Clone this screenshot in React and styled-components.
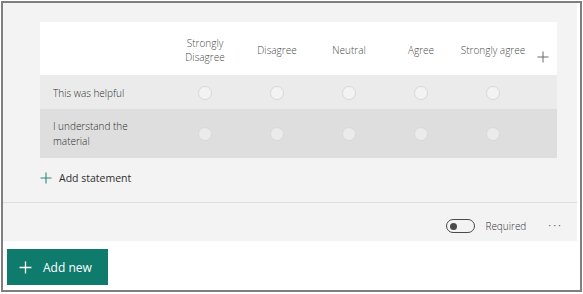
import React from "react";
import styled, { createGlobalStyle } from "styled-components";

const GlobalStyle = createGlobalStyle`
  html, body { margin: 0; padding: 0; background: #ffffff; }
  body { font-family: "Open Sans", "Noto Sans", sans-serif; }
  * { box-sizing: border-box; }
`;

const Frame = styled.div`
  margin: 1px;
  width: 581px;
  height: 291px;
  border: 2px solid #7f7f7f;
  background: #ffffff;
  display: flex;
  flex-direction: column;
`;

const Panel = styled.section`
  width: 574px;
  height: 238px;
  background: #f3f3f3;
  display: flex;
  flex-direction: column;
`;

const Body = styled.div`
  padding: 19px 20px 0 37px;
  flex: 1;
  display: flex;
  flex-direction: column;
`;

const Card = styled.div`
  background: #ffffff;
  display: grid;
  grid-template-columns: 129px repeat(5, 72px) 1fr;
`;

const HeadCell = styled.div`
  height: 53px;
  display: flex;
  align-items: center;
  justify-content: center;
  text-align: center;
  font-size: 10px;
  font-weight: 300;
  line-height: 14px;
  color: #4a4a4a;
  padding-top: 3px;
`;

const PlusCell = styled(HeadCell)`
  padding-top: 17px;
  color: #6a6a6a;
`;

const RowLabel = styled.div`
  height: ${(p) => p.$h}px;
  background: ${(p) => p.$bg};
  display: flex;
  align-items: center;
  padding-left: 13px;
  padding-top: ${(p) => p.$pt || 0}px;
  font-size: 10px;
  font-weight: 300;
  line-height: 15px;
  color: #2e2e2e;
`;

const RadioCell = styled.div`
  height: ${(p) => p.$h}px;
  background: ${(p) => p.$bg};
  display: flex;
  align-items: center;
  justify-content: center;
  padding-top: ${(p) => p.$pt || 0}px;
`;

const Radio = styled.span`
  width: 14px;
  height: 14px;
  border-radius: 50%;
  background: ${(p) => p.$fill};
  border: 1px solid #d8d8d8;
`;

const AddStatement = styled.div`
  height: 38px;
  display: flex;
  align-items: center;
  gap: 7px;
  padding-left: 0;
  padding-top: 1px;
  font-size: 10.5px;
  color: #2e2e2e;
`;

const Separator = styled.div`
  height: 1px;
  background: #dedede;
  margin-top: 6px;
`;

const Footer = styled.div`
  height: 38px;
  display: flex;
  align-items: center;
  justify-content: flex-end;
  padding-right: 14px;
  padding-top: 8px;
`;

const Toggle = styled.span`
  width: 29px;
  height: 14px;
  border: 1.5px solid #4a4a4a;
  border-radius: 7px;
  display: flex;
  align-items: center;
  padding-left: 2.5px;
`;

const Knob = styled.span`
  width: 7px;
  height: 7px;
  border-radius: 50%;
  background: #4a4a4a;
`;

const RequiredText = styled.span`
  font-size: 10px;
  font-weight: 300;
  color: #333333;
  margin-left: 10px;
`;

const More = styled.span`
  font-size: 11px;
  letter-spacing: 2px;
  color: #666666;
  margin-left: 22px;
  padding-bottom: 4px;
`;

const BottomBar = styled.div`
  padding: 8px 0 0 4px;
`;

const AddNewButton = styled.button`
  width: 101px;
  height: 36px;
  border: none;
  background: #0f7b6c;
  color: #ffffff;
  display: flex;
  align-items: center;
  gap: 11px;
  padding: 0 0 0 12px;
  font-family: "Open Sans", "Noto Sans", sans-serif;
  font-size: 12px;
  font-weight: 500;
  cursor: pointer;
`;

const PlusIcon = ({ size = 12, color = "currentColor", width = 1 }) => (
  <svg width={size} height={size} viewBox="0 0 12 12">
    <path d="M6 0.5V11.5M0.5 6H11.5" stroke={color} strokeWidth={width} fill="none" />
  </svg>
);

const columns = ["Strongly\nDisagree", "Disagree", "Neutral", "Agree", "Strongly agree"];
const rows = [
  { label: "This was helpful", h: 34, bg: "#ebebeb", fill: "#f3f3f3", pt: 2 },
  { label: "I understand the\nmaterial", h: 49, bg: "#dedede", fill: "#ebebeb", pt: 0 },
];

export default function App() {
  return (
    <>
      <GlobalStyle />
      <Frame>
        <Panel>
          <Body>
            <Card>
              <HeadCell />
              {columns.map((c) => (
                <HeadCell key={c}>
                  <span style={{ whiteSpace: "pre-line" }}>{c}</span>
                </HeadCell>
              ))}
              <PlusCell>
                <PlusIcon size={12} color="#6a6a6a" width={1} />
              </PlusCell>
              {rows.map((r) => (
                <React.Fragment key={r.label}>
                  <RowLabel $h={r.h} $bg={r.bg} $pt={r.pt}>
                    <span style={{ whiteSpace: "pre-line" }}>{r.label}</span>
                  </RowLabel>
                  {columns.map((c) => (
                    <RadioCell key={c} $h={r.h} $bg={r.bg} $pt={r.pt}>
                      <Radio $fill={r.fill} />
                    </RadioCell>
                  ))}
                  <RadioCell $h={r.h} $bg={r.bg} />
                </React.Fragment>
              ))}
            </Card>
            <AddStatement>
              <PlusIcon size={12} color="#2a8a7c" width={1.1} />
              <span>Add statement</span>
            </AddStatement>
          </Body>
          <Separator />
          <Footer>
            <Toggle>
              <Knob />
            </Toggle>
            <RequiredText>Required</RequiredText>
            <More>···</More>
          </Footer>
        </Panel>
        <BottomBar>
          <AddNewButton>
            <PlusIcon size={13} color="#ffffff" width={1.2} />
            <span>Add new</span>
          </AddNewButton>
        </BottomBar>
      </Frame>
    </>
  );
}
